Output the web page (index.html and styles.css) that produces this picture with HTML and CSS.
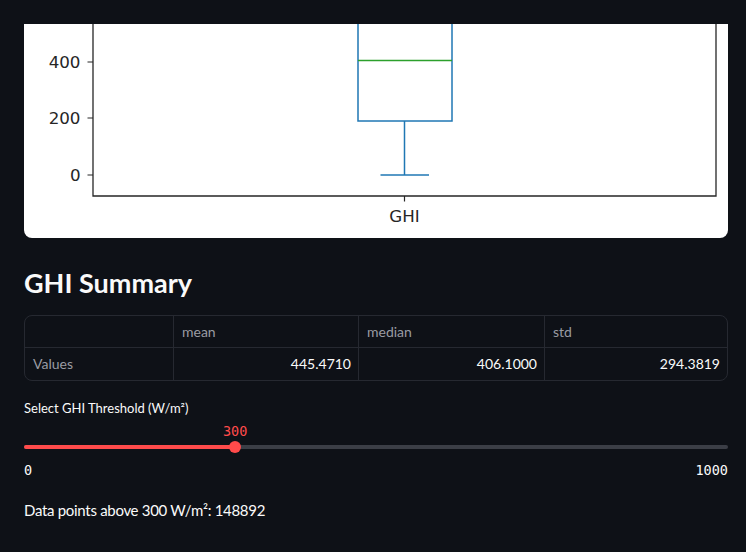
FILE: index.html
```html
<!DOCTYPE html>
<html lang="en">
<head>
<meta charset="utf-8">
<title>GHI Summary</title>
<link rel="stylesheet" href="styles.css">
</head>
<body>
<main class="main">
  <div class="chart-card">
    <svg class="chart" width="704" height="214" viewBox="0 0 704 214" xmlns="http://www.w3.org/2000/svg">
      <!-- box -->
      <rect x="334" y="-10" width="94" height="107" fill="none" stroke="#1f77b4" stroke-width="1.5"/>
      <line x1="334" y1="36.5" x2="428" y2="36.5" stroke="#2ca02c" stroke-width="1.5"/>
      <line x1="380.5" y1="97" x2="380.5" y2="151" stroke="#1f77b4" stroke-width="1.5"/>
      <line x1="356.5" y1="151" x2="405" y2="151" stroke="#1f77b4" stroke-width="1.5"/>
      <!-- spines -->
      <polyline points="69,-5 69,172 692,172 692,-5" fill="none" stroke="#262626" stroke-width="1.3"/>
      <!-- y ticks -->
      <line x1="63.5" y1="38" x2="69" y2="38" stroke="#262626" stroke-width="1.2"/>
      <line x1="63.5" y1="94" x2="69" y2="94" stroke="#262626" stroke-width="1.2"/>
      <line x1="63.5" y1="151" x2="69" y2="151" stroke="#262626" stroke-width="1.2"/>
      <text class="tick" x="56.5" y="44" text-anchor="end">400</text>
      <text class="tick" x="56.5" y="100" text-anchor="end">200</text>
      <text class="tick" x="56.5" y="157" text-anchor="end">0</text>
      <!-- x tick -->
      <line x1="380.5" y1="172" x2="380.5" y2="177.5" stroke="#262626" stroke-width="1.2"/>
      <text class="tick" x="380.5" y="198" text-anchor="middle">GHI</text>
    </svg>
  </div>

  <h3 class="title">GHI Summary</h3>

  <div class="table">
    <div class="cell head idx"></div>
    <div class="cell head">mean</div>
    <div class="cell head">median</div>
    <div class="cell head last">std</div>
    <div class="cell idx body">Values</div>
    <div class="cell num body">445.4710</div>
    <div class="cell num body">406.1000</div>
    <div class="cell num body last">294.3819</div>
  </div>

  <label class="slider-label">Select GHI Threshold (W/m²)</label>
  <div class="slider">
    <div class="track-zone">
      <div class="track">
        <div class="fill" style="width: 30%"></div>
      </div>
      <div class="thumb" style="left: 30%">
        <span class="thumb-value">300</span>
      </div>
    </div>
    <div class="range">
      <span>0</span>
      <span>1000</span>
    </div>
  </div>

  <p class="result">Data points above 300 W/m²: 148892</p>
</main>
</body>
</html>
```

FILE: styles.css
```css
html, body {
  margin: 0;
  padding: 0;
  background: #0e1117;
}

body {
  font-family: Lato, "Noto Sans", sans-serif;
  color: #fafafa;
}

.main {
  padding: 24px 18px 0 24px;
  display: flex;
  flex-direction: column;
}

.chart-card {
  height: 214px;
  background: #ffffff;
  border-radius: 0 0 8px 8px;
  overflow: hidden;
}

.chart {
  display: block;
}

.tick {
  font-family: "DejaVu Sans", sans-serif;
  font-size: 16.7px;
  fill: #262626;
}

.title {
  margin: 16px 0 15px;
  padding: 12px 0 0;
  font-size: 27px;
  line-height: 34px;
  font-weight: 700;
  color: #fafafa;
}

.table {
  display: grid;
  grid-template-columns: 149px 185px 186px 1fr;
  grid-template-rows: 32px 32px;
  border: 1px solid #262931;
  border-radius: 8px;
  overflow: hidden;
  font-size: 14px;
}

.cell {
  padding: 0 7px 0 8px;
  line-height: 32px;
  border-right: 1px solid #262931;
  white-space: nowrap;
}

.cell.last {
  border-right: none;
}

.head {
  border-bottom: 1px solid #262931;
  color: #9a9ca3;
}

.idx {
  color: #9a9ca3;
}

.num {
  text-align: right;
  color: #fafafa;
}

.slider-label {
  margin-top: 16px;
  font-size: 13px;
  line-height: 22px;
  color: #fafafa;
}

.slider {
  padding-top: 22px;
}

.track-zone {
  position: relative;
  height: 12px;
  display: flex;
  align-items: center;
}

.track {
  flex: 1;
  height: 4px;
  border-radius: 2px;
  background: #3b3e46;
  overflow: hidden;
}

.fill {
  height: 100%;
  background: #ff4b4b;
}

.thumb {
  position: absolute;
  top: 0;
  width: 12px;
  height: 12px;
  margin-left: -6px;
  border-radius: 50%;
  background: #ff4b4b;
}

.thumb-value {
  position: absolute;
  left: 50%;
  bottom: 15px;
  transform: translateX(-50%);
  font-family: "DejaVu Sans Mono", monospace;
  font-size: 13.5px;
  line-height: 14px;
  color: #ff4b4b;
}

.range {
  margin-top: 7px;
  display: flex;
  justify-content: space-between;
  font-family: "DejaVu Sans Mono", monospace;
  font-size: 13.5px;
  line-height: 20px;
  color: #fafafa;
}

.result {
  margin: 18px 0 0;
  font-size: 15px;
  letter-spacing: -0.3px;
  line-height: 24px;
  color: #fafafa;
}
```
